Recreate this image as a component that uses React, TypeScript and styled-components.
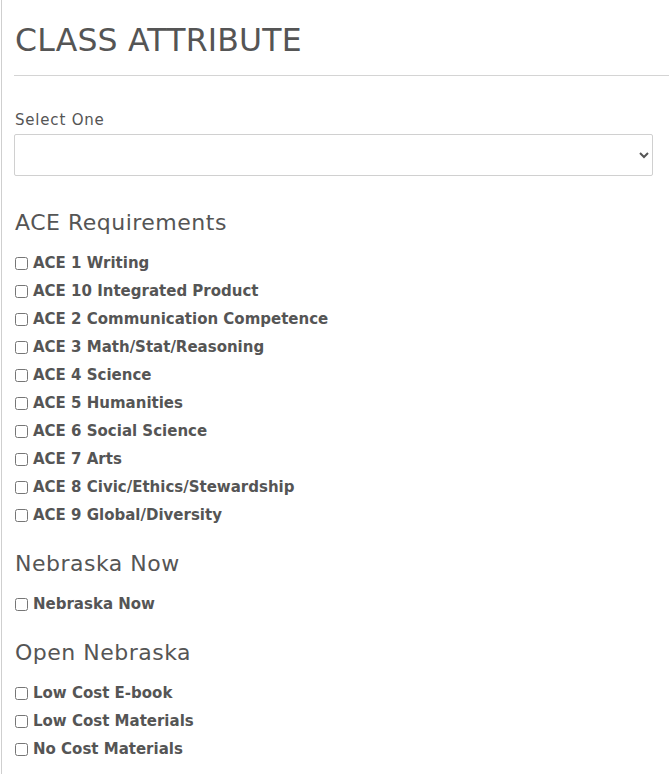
import styled, {createGlobalStyle} from "styled-components";

const GlobalStyle = createGlobalStyle`
  html, body {
    margin: 0;
    padding: 0;
    background: #fff;
  }
  body {
    font-family: "DejaVu Sans", "Liberation Sans", sans-serif;
    color: #545454;
  }
`

const sections = [
    {
        title: 'ACE Requirements',
        items: [
            'ACE 1 Writing',
            'ACE 10 Integrated Product',
            'ACE 2 Communication Competence',
            'ACE 3 Math/Stat/Reasoning',
            'ACE 4 Science',
            'ACE 5 Humanities',
            'ACE 6 Social Science',
            'ACE 7 Arts',
            'ACE 8 Civic/Ethics/Stewardship',
            'ACE 9 Global/Diversity',
        ],
    },
    {title: 'Nebraska Now', items: ['Nebraska Now']},
    {title: 'Open Nebraska', items: ['Low Cost E-book', 'Low Cost Materials', 'No Cost Materials']},
];

const App = () => {
    return (
        <>
            <GlobalStyle/>
            <Page>
                <Header>
                    <Title>CLASS ATTRIBUTE</Title>
                </Header>
                <Form>
                    <FieldLabel htmlFor="attr">Select One</FieldLabel>
                    <Select id="attr" defaultValue="">
                        <option value=""></option>
                        <option value="ace">ACE Requirements</option>
                        <option value="now">Nebraska Now</option>
                        <option value="open">Open Nebraska</option>
                    </Select>
                    {sections.map(section => (
                        <Section key={section.title}>
                            <SectionTitle>{section.title}</SectionTitle>
                            <List>
                                {section.items.map(item => (
                                    <Row key={item}>
                                        <Check type="checkbox"/>
                                        <span>{item}</span>
                                    </Row>
                                ))}
                            </List>
                        </Section>
                    ))}
                </Form>
            </Page>
        </>
    );
}

const Page = styled.div`
  margin-left: 1px;
  border-left: 1px solid #cfcfcf;
  padding-left: 12px;
  min-height: 100vh;
  box-sizing: border-box;
`

const Header = styled.header`
  padding-top: 21px;
  padding-bottom: 16px;
  border-bottom: 1px solid #d4d4d4;
`

const Title = styled.h1`
  margin: 0;
  padding-left: 1px;
  font-size: 31.5px;
  line-height: 38px;
  font-weight: normal;
  letter-spacing: 0.2px;
  color: #555;
`

const Form = styled.div`
  display: flex;
  flex-direction: column;
  padding-right: 16px;
  padding-top: 34px;
  padding-bottom: 20px;
`

const FieldLabel = styled.label`
  display: block;
  padding-left: 1px;
  font-size: 15px;
  line-height: 20px;
  letter-spacing: 0.8px;
  color: #555;
`

const Select = styled.select`
  display: block;
  width: 100%;
  height: 42px;
  margin-top: 4px;
  margin-bottom: 12px;
  border: 1px solid #d0d0d0;
  border-radius: 2px;
  background: #fff;
  font-family: inherit;
  font-size: 15px;
  color: #555;
`

const Section = styled.section`
  margin-top: 21px;
`

const SectionTitle = styled.h2`
  margin: 0;
  padding-left: 1px;
  font-size: 22px;
  line-height: 28px;
  font-weight: normal;
  letter-spacing: 0.5px;
  color: #555;
`

const List = styled.div`
  margin-top: 12px;
  display: flex;
  flex-direction: column;
`

const Row = styled.label`
  display: flex;
  align-items: center;
  height: 28px;
  font-size: 15px;
  font-weight: bold;
  color: #555;
`

const Check = styled.input`
  width: 13px;
  height: 13px;
  margin: 0 5px 0 1px;
`

export default App
